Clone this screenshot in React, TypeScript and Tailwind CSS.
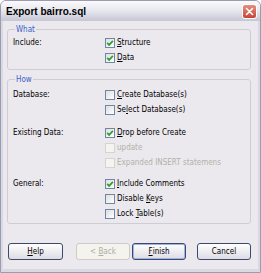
import React from 'react';

// small XP-style checkbox
const Check = ({ checked, disabled }: { checked?: boolean; disabled?: boolean }) => (
  <span
    className={`flex h-[10px] w-[10px] shrink-0 items-center justify-center border ${
      disabled
        ? 'border-[#d6d4cc] bg-[#f5f4f0]'
        : 'border-[#6f86a6] bg-gradient-to-br from-[#dedde2] to-white'
    }`}
  >
    {checked && (
      <svg width="8" height="8" viewBox="0 0 8 8">
        <path d="M1.2 3.9 L3.1 5.9 L6.9 1.9" stroke="#2ba02b" strokeWidth="1.7" fill="none" />
      </svg>
    )}
  </span>
);

const Option = ({ children, checked, disabled }: { children: React.ReactNode; checked?: boolean; disabled?: boolean }) => (
  <div className="flex h-[15px] items-center gap-[2px]">
    <Check checked={checked} disabled={disabled} />
    <span className={disabled ? 'text-[#b3b1a8]' : 'text-black'}>{children}</span>
  </div>
);

const Section = ({ label, children, className = '' }: { label: string; children: React.ReactNode; className?: string }) => (
  <div className={`flex ${className}`}>
    <div className="flex h-[15px] w-[92px] items-center">{label}</div>
    <div className="flex flex-col">{children}</div>
  </div>
);

const Group = ({ title, children, className = '' }: { title: string; children: React.ReactNode; className?: string }) => (
  <fieldset className={`w-[244px] rounded-[3px] border border-[#cfcdd3] px-[5px] ${className}`}>
    <legend className="ml-[2px] px-[1px] leading-[11px] text-[#3a62c9]">{title}</legend>
    {children}
  </fieldset>
);

const Button = ({ children, className = '', variant = 'normal' }: { children: React.ReactNode; className?: string; variant?: 'normal' | 'default' | 'disabled' }) => (
  <div
    className={`flex h-[17px] w-[54px] items-center justify-center whitespace-pre rounded-[3px] border ${
      variant === 'disabled'
        ? 'border-[#cdcbc3] bg-[#f4f3ee] text-[#aeaca3]'
        : variant === 'default'
        ? 'border-[#3b4a6b] bg-gradient-to-b from-white to-[#dddce4] text-black shadow-[inset_0_0_0_1px_#9fb4e6]'
        : 'border-[#3b4a6b] bg-gradient-to-b from-white to-[#dddce4] text-black'
    } ${className}`}
  >
    {children}
  </div>
);

export default function App() {
  return (
    <div className="h-[273px] w-[261px] font-['DejaVu_Sans_Condensed','Liberation_Sans',sans-serif] text-[8px]">
      <div className="flex h-full w-full flex-col overflow-hidden rounded-t-[6px] border border-[#9c9cb0] bg-[#d9d9e3]">
        {/* title bar */}
        <div className="flex h-[20px] shrink-0 items-center justify-between bg-gradient-to-b from-[#fbfbfd] via-[#e6e6ee] to-[#c6c6d4] pl-[5px] pr-[3px]">
          <span className="font-['Liberation_Sans',sans-serif] text-[10px] font-bold text-black">Export bairro.sql</span>
          <div className="flex h-[15px] w-[15px] items-center justify-center rounded-[3px] border border-white bg-gradient-to-b from-[#e48f80] to-[#c44436]">
            <svg width="9" height="9" viewBox="0 0 9 9">
              <path d="M1.5 1.5 L7.5 7.5 M7.5 1.5 L1.5 7.5" stroke="white" strokeWidth="1.6" strokeLinecap="round" />
            </svg>
          </div>
        </div>

        {/* dialog body */}
        <div className="mx-[2px] mb-[3px] flex flex-1 flex-col bg-[#ebe9ee] pl-[4px] pt-[3px]">
          <Group title="What" className="pb-[4px]">
            <Section label="Include:">
              <Option checked><u>S</u>tructure</Option>
              <Option checked><u>D</u>ata</Option>
            </Section>
          </Group>

          <Group title="How" className="mt-[4px] pb-[2px] pt-[2px]">
            <Section label="Database:">
              <Option><u>C</u>reate Database(s)</Option>
              <Option>Se<u>l</u>ect Database(s)</Option>
            </Section>
            <Section label="Existing Data:" className="mt-[8px]">
              <Option checked><u>D</u>rop before Create</Option>
              <Option disabled>update</Option>
              <Option disabled>Expanded INSERT statemens</Option>
            </Section>
            <Section label="General:" className="mt-[6px]">
              <Option checked><u>I</u>nclude Comments</Option>
              <Option>Disable <u>K</u>eys</Option>
              <Option>Lock <u>T</u>able(s)</Option>
            </Section>
          </Group>

          <div className="mt-[19px] flex">
            <Button className="ml-[1px] w-[55px]"><u>H</u>elp</Button>
            <Button variant="disabled" className="ml-[13px] w-[53px]">{'< '}<u>B</u>ack</Button>
            <Button variant="default" className="ml-[2px]"><u>F</u>inish</Button>
            <Button className="ml-[11px]">Cancel</Button>
          </div>
        </div>
      </div>
    </div>
  );
}
